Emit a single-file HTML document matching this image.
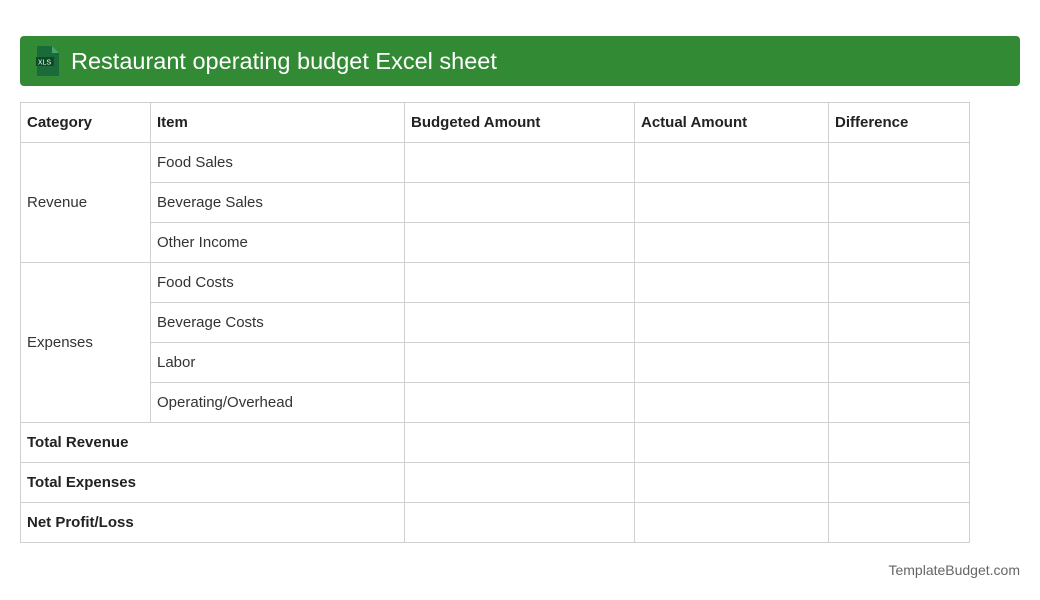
<!DOCTYPE html>
<html><head><style>
body{margin:0;width:1040px;height:600px;background:#fff;font-family:"Liberation Sans",Arial,sans-serif;position:relative;overflow:hidden}
.hdr{position:absolute;left:20px;top:36px;width:1000px;height:50px;background:#338a35;border-radius:4px}
.hdr .t{position:absolute;left:51px;top:11px;color:#fff;font-size:23.5px;line-height:28px}
.ic{position:absolute;left:16px;top:10px}
table{position:absolute;left:20px;top:102px;border-collapse:collapse;font-size:15px;color:#333;table-layout:fixed}
td{border:1px solid #d0d0d0;height:40px;padding:0 0 0 6px;box-sizing:border-box}
tr{height:40px}
b{color:#222}
.f{position:absolute;right:20px;top:562px;font-size:14px;color:#666}
</style></head><body>
<div class="hdr"><svg class="ic" width="24" height="30" viewBox="0 0 24 30"><path d="M1 0H16L23 7V30H1Z" fill="#1b6b3a"/><path d="M16 0V7H23Z" fill="#4aa46a"/><rect x="-1" y="11" width="19" height="9" fill="#0d4a26"/><text x="8.5" y="18.5" font-size="7" fill="#fff" text-anchor="middle" font-family="Liberation Sans">XLS</text></svg><div class="t">Restaurant operating budget Excel sheet</div></div>
<table>
<colgroup><col style="width:130px"><col style="width:254px"><col style="width:230px"><col style="width:194px"><col style="width:141px"></colgroup>
<tr><td><b>Category</b></td><td><b>Item</b></td><td><b>Budgeted Amount</b></td><td><b>Actual Amount</b></td><td><b>Difference</b></td></tr>
<tr><td rowspan="3">Revenue</td><td>Food Sales</td><td></td><td></td><td></td></tr>
<tr><td>Beverage Sales</td><td></td><td></td><td></td></tr>
<tr><td>Other Income</td><td></td><td></td><td></td></tr>
<tr><td rowspan="4">Expenses</td><td>Food Costs</td><td></td><td></td><td></td></tr>
<tr><td>Beverage Costs</td><td></td><td></td><td></td></tr>
<tr><td>Labor</td><td></td><td></td><td></td></tr>
<tr><td>Operating/Overhead</td><td></td><td></td><td></td></tr>
<tr><td colspan="2"><b>Total Revenue</b></td><td></td><td></td><td></td></tr>
<tr><td colspan="2"><b>Total Expenses</b></td><td></td><td></td><td></td></tr>
<tr><td colspan="2"><b>Net Profit/Loss</b></td><td></td><td></td><td></td></tr>
</table>
<div class="f">TemplateBudget.com</div>
</body></html>
